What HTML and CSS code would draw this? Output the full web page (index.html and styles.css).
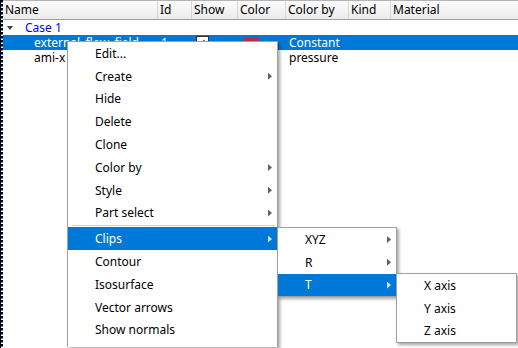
FILE: index.html
```html
<!DOCTYPE html>
<html lang="en">
  <head>
    <meta charset="UTF-8" />
    <title>parts</title>
    <link rel="stylesheet" href="styles.css">
  </head>
  <body>
    <div class="window">
      <div class="dockEdge"></div>
      <div class="tree">
        <div class="header">
          <div class="hcell">Name</div>
          <div class="hcell">Id</div>
          <div class="hcell">Show</div>
          <div class="hcell">Color</div>
          <div class="hcell">Color by</div>
          <div class="hcell">Kind</div>
          <div class="hcell">Material</div>
        </div>
        <div class="row">
          <div class="cell caseName">
            <svg class="twisty" width="6" height="4" viewBox="0 0 6 4"><polygon points="0,0 6,0 3,4" fill="#404040" /></svg>
            Case 1
          </div>
          <div class="cell"></div>
          <div class="cell"></div>
          <div class="cell"></div>
          <div class="cell"></div>
          <div class="cell"></div>
          <div class="cell"></div>
        </div>
        <div class="row selected">
          <div class="cell leaf">external_flow_field</div>
          <div class="cell">1</div>
          <div class="cell"><span class="check">&#10003;</span></div>
          <div class="cell"><span class="swatch"></span></div>
          <div class="cell">Constant</div>
          <div class="cell"></div>
          <div class="cell"></div>
        </div>
        <div class="row">
          <div class="cell leaf">ami-x</div>
          <div class="cell"></div>
          <div class="cell"></div>
          <div class="cell"></div>
          <div class="cell">pressure</div>
          <div class="cell"></div>
          <div class="cell"></div>
        </div>
      </div>
    </div>

    <!-- 우클릭 메뉴 -->
    <div class="menu menuMain">
      <div class="item">Edit...</div>
      <div class="item sub">Create</div>
      <div class="item">Hide</div>
      <div class="item">Delete</div>
      <div class="item">Clone</div>
      <div class="item sub">Color by</div>
      <div class="item sub">Style</div>
      <div class="item sub">Part select</div>
      <div class="sep"></div>
      <div class="item sub active">Clips</div>
      <div class="item">Contour</div>
      <div class="item">Isosurface</div>
      <div class="item">Vector arrows</div>
      <div class="item">Show normals</div>
    </div>

    <div class="menu menuClips">
      <div class="item sub">XYZ</div>
      <div class="item sub">R</div>
      <div class="item sub active">T</div>
    </div>

    <div class="menu menuAxis">
      <div class="item">X axis</div>
      <div class="item">Y axis</div>
      <div class="item">Z axis</div>
    </div>
  </body>
</html>
```

FILE: styles.css
```css
html,
body {
  margin: 0;
}
body {
  position: relative;
  width: 518px;
  height: 348px;
  overflow: hidden;
  background: #fff;
  color: #000;
  font: 12px "Noto Sans", "DejaVu Sans", sans-serif;
}
.window {
  display: flex;
  height: 100%;
}
/* 왼쪽 도킹 테두리 */
.dockEdge {
  flex: none;
  width: 3px;
  background: linear-gradient(to right, #000 1px, transparent 1px),
    repeating-linear-gradient(to bottom, #000 0 2px, #4a8fdf 2px 3px, #fff 3px 4px);
}
.tree {
  flex: 1;
  min-width: 0;
}
.header,
.row {
  display: grid;
  grid-template-columns: 155px 34px 46px 48px 63px 42px 1fr;
}
.header {
  height: 18px;
  border-top: 1px solid #b4b4b4;
  border-bottom: 1px solid #a0a0a0;
  background: linear-gradient(#fcfcfc, #ebebeb);
}
.hcell {
  padding-left: 2px;
  line-height: 18px;
  border-right: 1px solid #d6d6d6;
  white-space: nowrap;
}
.hcell:last-child {
  border-right: none;
}
.row {
  height: 15px;
  line-height: 15px;
}
.cell {
  padding-left: 3px;
  white-space: nowrap;
  overflow: hidden;
}
.caseName {
  display: flex;
  align-items: center;
  gap: 12px;
  padding-left: 4px;
  color: #0000ff;
}
.leaf {
  padding-left: 31px;
}
.selected {
  background: #0078d7;
  color: #fff;
}
.check {
  display: inline-block;
  box-sizing: border-box;
  width: 13px;
  height: 13px;
  margin: 1px 0 0 1px;
  border: 1px solid #333;
  background: #fff;
  color: #000;
  font-size: 10px;
  line-height: 11px;
  text-align: center;
  vertical-align: top;
}
.swatch {
  display: inline-block;
  width: 16px;
  height: 12px;
  margin: 2px 0 0 2px;
  background: #b2314e;
  vertical-align: top;
}

.menu {
  position: absolute;
  background: #fff;
  border: 1px solid #a0a0a0;
  box-shadow: 2px 2px 3px rgba(0, 0, 0, 0.35);
}
.menuMain {
  left: 67px;
  top: 41px;
  width: 209px;
  /* 화면 아래 끝까지 이어지는 메뉴 */
  border-bottom: none;
  padding-bottom: 6px;
}
.menuClips {
  left: 277px;
  top: 227px;
  width: 118px;
}
.menuAxis {
  left: 396px;
  top: 273px;
  width: 119px;
}
.item {
  position: relative;
  display: flex;
  align-items: center;
  height: 22.8px;
  padding-left: 27px;
  white-space: nowrap;
}
.sub::after {
  content: "";
  position: absolute;
  right: 5px;
  top: 8px;
  width: 4px;
  height: 7px;
  background: #606060;
  clip-path: polygon(0 0, 100% 50%, 0 100%);
}
.active {
  background: #0078d7;
  color: #fff;
}
.active::after {
  background: #cfe3f7;
}
.sep {
  height: 3px;
  margin: 0 2px 0 4px;
  background: linear-gradient(transparent 1px, #d0d0d0 1px, #d0d0d0 2px, transparent 2px);
}
```
